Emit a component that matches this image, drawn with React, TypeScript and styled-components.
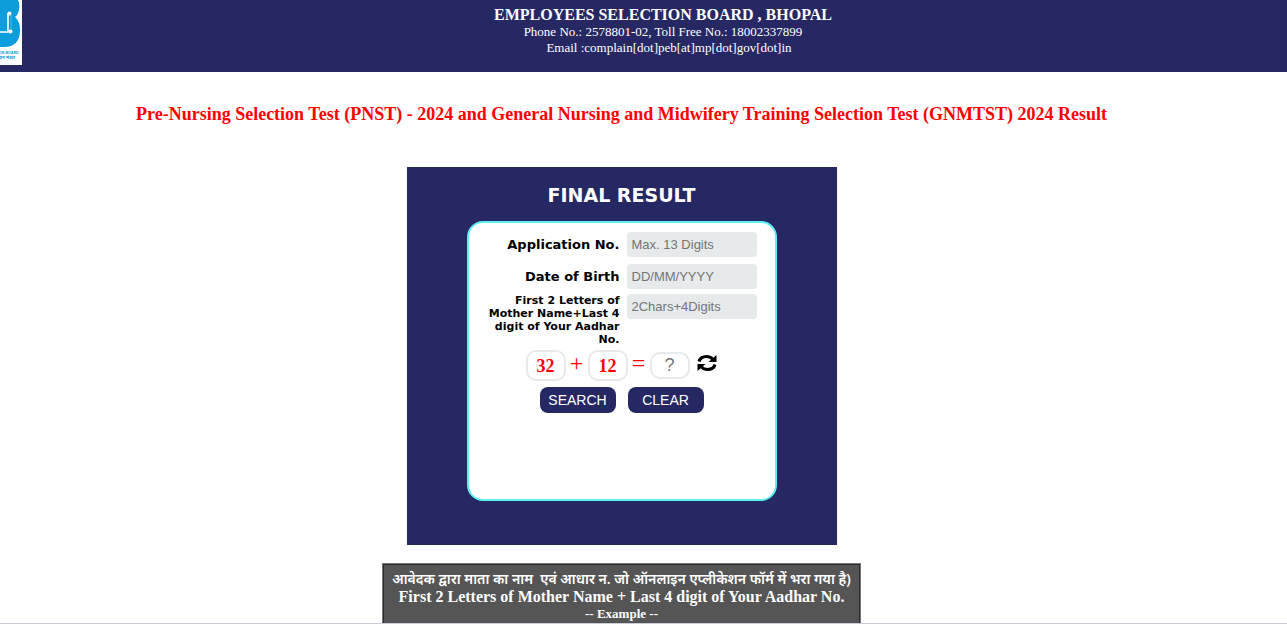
import React from "react";
import styled, { createGlobalStyle } from "styled-components";

const navy = "#262863";

const GlobalStyle = createGlobalStyle`
  *, *::before, *::after { box-sizing: border-box; }
  body { margin: 0; background: #fff; font-family: "Liberation Serif", "Times New Roman", serif; }
  h1, h2, h3, p { margin: 0; }
`;

const Page = styled.div`
  display: flex;
  flex-direction: column;
  height: 100vh;
  overflow: hidden;
  border-bottom: 1px solid #c8ccd6;
`;

const Header = styled.header`
  display: flex;
  flex: none;
  align-items: flex-start;
  height: 72px;
  background: ${navy};
  color: #fff;
`;

const Logo = styled.svg`
  display: block;
  flex: none;
  width: 22px;
  height: 65px;
  background: #fff;
`;

const HeaderText = styled.div`
  flex: 1;
  padding: 6px 0 0 17px;
  text-align: center;
`;

const BoardName = styled.h1`
  font-size: 16px;
  line-height: 18px;
`;

const Contact = styled.p<{ $indent?: boolean }>`
  font-size: 13px;
  line-height: 16px;
  padding-left: ${(p) => (p.$indent ? "12px" : "0")};
`;

const Main = styled.main`
  display: flex;
  flex-direction: column;
  align-items: center;
  flex: 1;
  min-height: 0;
  padding: 32px 44px 0 0;
`;

const Title = styled.h2`
  flex: none;
  color: #f00;
  font-size: 18px;
  line-height: 21px;
  text-align: center;
`;

const Panel = styled.section`
  display: flex;
  flex-direction: column;
  align-items: center;
  flex: none;
  width: 430px;
  max-width: 100%;
  margin-top: 42px;
  padding: 16px 0 44px;
  background: ${navy};
  font-family: "DejaVu Sans", Verdana, sans-serif;
`;

const PanelTitle = styled.h3`
  color: #fff;
  font-size: 19px;
  line-height: 24px;
`;

const Card = styled.form`
  width: 310px;
  min-height: 280px;
  margin-top: 14px;
  padding: 9px 18px 0 16px;
  border: 2px solid #5cf0f5;
  border-radius: 16px;
  background: #fff;
`;

const Field = styled.div`
  display: flex;
  justify-content: flex-end;
  align-items: flex-start;
  gap: 7px;
  margin-bottom: 7px;
`;

const CompactField = styled(Field)`
  margin: -2px 0 4px;
`;

const Label = styled.label<{ $small?: boolean }>`
  width: 137px;
  color: #000;
  font-weight: bold;
  font-size: ${(p) => (p.$small ? "11px" : "13px")};
  line-height: ${(p) => (p.$small ? "13px" : "25px")};
  text-align: right;
`;

const TextInput = styled.input`
  width: 130px;
  height: 25px;
  padding: 0 5px;
  border: 0;
  border-radius: 4px;
  background: #e6eaea;
  font: 13px "Liberation Sans", Arial, sans-serif;
  &::placeholder { color: #757575; opacity: 1; }
`;

const Captcha = styled.div`
  display: flex;
  align-items: center;
  height: 31px;
  padding-left: 41px;
  font-family: "Liberation Serif", "Times New Roman", serif;
`;

const Operand = styled.output`
  width: 40px;
  height: 31px;
  border: 2px solid #e6eaea;
  border-radius: 10px;
  color: #f00;
  font-weight: bold;
  font-size: 18px;
  line-height: 28px;
  text-align: center;
`;

const Operator = styled.span`
  width: 22px;
  color: #f00;
  font-size: 24px;
  line-height: 24px;
  text-align: center;
  padding-bottom: 6px;
`;

const Answer = styled.input`
  width: 40px;
  height: 27px;
  padding: 0;
  border: 2px solid #e6eaea;
  border-radius: 10px;
  background: #fff;
  font: 18px "Liberation Sans", Arial, sans-serif;
  text-align: center;
  &::placeholder { color: #757575; opacity: 1; }
`;

const Refresh = styled.button`
  width: 20px;
  height: 18px;
  margin: 0 0 5px 7px;
  padding: 0;
  border: 0;
  background: none;
  svg { display: block; }
`;

const Actions = styled.div`
  display: flex;
  gap: 12px;
  margin-top: 6px;
  padding-left: 55px;
`;

const Action = styled.button`
  width: 76px;
  height: 26px;
  padding: 0;
  border: 0;
  border-radius: 8px;
  background: ${navy};
  color: #fff;
  font: 14px "Liberation Sans", Arial, sans-serif;
`;

const Note = styled.aside`
  display: flex;
  flex-direction: column;
  align-items: center;
  flex: none;
  width: 479px;
  margin-top: 18px;
  padding: 6px 0 8px;
  border: 1px solid #777;
  box-shadow: inset 1px 1px #2b2b2b, inset -1px 0 #2b2b2b;
  background: #555;
  color: #fff;
  font-weight: bold;
`;

const NoteLine = styled.p<{ $small?: boolean }>`
  font-size: ${(p) => (p.$small ? "13px" : "16px")};
  line-height: ${(p) => (p.$small ? "16px" : "18px")};
  white-space: pre;
`;

const HindiLine = styled(NoteLine)`
  font-family: "Noto Sans", "Noto Sans Devanagari", sans-serif;
  font-size: 14px;
  font-weight: 600;
`;

export default function App() {
  return (
    <Page>
      <GlobalStyle />
      <Header>
        <Logo viewBox="0 0 22 65" aria-label="Employees Selection Board">
          <path d="M0 0H18Q20 4 19 10Q18 15 15 17Q20 21 20 30Q20 47 4 47H0Z" fill="#0d9ddb" />
          <path d="M8 13V32H0" fill="none" stroke="#fff" strokeWidth="1.6" />
          <path d="M11 15V30" fill="none" stroke="#7cc9ec" strokeWidth="0.6" />
          <circle cx="9.5" cy="13.5" r="2" fill="#fff" />
          <circle cx="10.5" cy="31.5" r="2" fill="#fff" />
          <text x="-1" y="53.5" fontFamily="Liberation Sans, sans-serif" fontSize="3.6" fontWeight="bold" fill="#0d9ddb">ON BOARD</text>
          <text x="-1" y="59" fontFamily="Noto Sans, sans-serif" fontSize="4.6" fontWeight="bold" fill="#0d9ddb">यन मंडल</text>
        </Logo>
        <HeaderText>
          <BoardName>EMPLOYEES SELECTION BOARD , BHOPAL</BoardName>
          <Contact>Phone No.: 2578801-02, Toll Free No.: 18002337899</Contact>
          <Contact $indent>Email :complain[dot]peb[at]mp[dot]gov[dot]in</Contact>
        </HeaderText>
      </Header>
      <Main>
        <Title>Pre-Nursing Selection Test (PNST) - 2024 and General Nursing and Midwifery Training Selection Test (GNMTST) 2024 Result</Title>
        <Panel>
          <PanelTitle>FINAL RESULT</PanelTitle>
          <Card onSubmit={(e) => e.preventDefault()}>
            <Field>
              <Label htmlFor="application">Application No.</Label>
              <TextInput id="application" maxLength={13} placeholder="Max. 13 Digits" />
            </Field>
            <Field>
              <Label htmlFor="birth">Date of Birth</Label>
              <TextInput id="birth" placeholder="DD/MM/YYYY" />
            </Field>
            <CompactField>
              <Label htmlFor="code" $small>First 2 Letters of Mother Name+Last 4 digit of Your Aadhar No.</Label>
              <TextInput id="code" maxLength={6} placeholder="2Chars+4Digits" />
            </CompactField>
            <Captcha>
              <Operand>32</Operand>
              <Operator>+</Operator>
              <Operand>12</Operand>
              <Operator>=</Operator>
              <Answer aria-label="Sum" placeholder="?" />
              <Refresh type="button" aria-label="New sum">
                <svg width="20" height="18" viewBox="0 0 20 18">
                  <path d="M2 7.5C3 4 6 2.5 9.5 2.5C12 2.5 14 3.3 15.8 5.3M18 10.5C17 14 14 15.5 10.5 15.5C8 15.5 6 14.7 4.2 12.7" fill="none" stroke="#000" strokeWidth="3.2" />
                  <path d="M19.5 1V8H11.5ZM0.5 17V10H8.5Z" />
                </svg>
              </Refresh>
            </Captcha>
            <Actions>
              <Action type="submit">SEARCH</Action>
              <Action type="reset">CLEAR</Action>
            </Actions>
          </Card>
        </Panel>
        <Note>
          <HindiLine lang="hi">आवेदक द्वारा माता का नाम  एवं आधार न. जो ऑनलाइन एप्लीकेशन फॉर्म में भरा गया है)</HindiLine>
          <NoteLine>First 2 Letters of Mother Name + Last 4 digit of Your Aadhar No.</NoteLine>
          <NoteLine $small>-- Example --</NoteLine>
        </Note>
      </Main>
    </Page>
  );
}
